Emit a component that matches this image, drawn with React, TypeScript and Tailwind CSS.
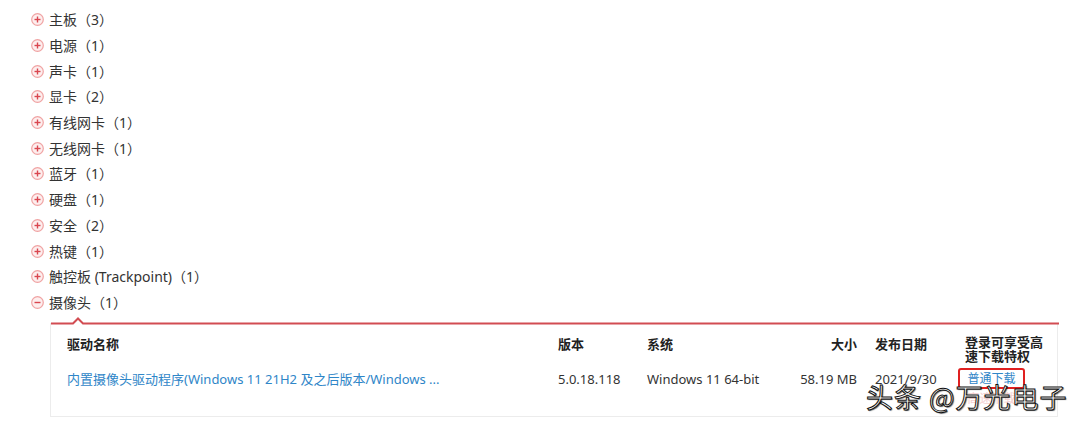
import React from "react";

const categories = [
  "主板（3）",
  "电源（1）",
  "声卡（1）",
  "显卡（2）",
  "有线网卡（1）",
  "无线网卡（1）",
  "蓝牙（1）",
  "硬盘（1）",
  "安全（2）",
  "热键（1）",
  "触控板 (Trackpoint)（1）",
];

function ToggleIcon({ open }: { open?: boolean }) {
  return (
    <svg width="13" height="13" viewBox="0 0 13 13" className="shrink-0">
      <circle cx="6.5" cy="6.5" r="5.8" fill="#fdeeee" stroke="#f0a3a3" strokeWidth="1.2" />
      <path d="M3.5 6.5h6" stroke="#d9464f" strokeWidth="1.4" />
      {!open && <path d="M6.5 3.5v6" stroke="#d9464f" strokeWidth="1.4" />}
    </svg>
  );
}

const cols = "grid grid-cols-[491px_89px_120px_90px_18px_90px_1fr] pl-[16px]";

export default function App() {
  return (
    <div
      className="relative h-[423px] w-[1080px] overflow-hidden bg-white text-[14px] text-[#333]"
      style={{ fontFamily: '"Noto Sans", "Noto Sans CJK SC", sans-serif' }}
    >
      <ul className="pt-[7px] pl-[31px]">
        {categories.map((c) => (
          <li key={c} className="flex h-[25.7px] items-center gap-[5px]">
            <ToggleIcon />
            <span>{c}</span>
          </li>
        ))}
        <li className="flex h-[25.7px] items-center gap-[5px]">
          <ToggleIcon open />
          <span>摄像头（1）</span>
        </li>
      </ul>

      {/* 驱动列表 */}
      <div className="relative mt-[8px] ml-[50px] h-[94px] w-[1008px] border-x border-b border-[#ececec]">
        <svg width="1008" height="8" viewBox="0 0 1008 8" className="absolute -top-[6px] left-0">
          <path d="M0 6.5H22L27 1.5L32 6.5H1008" fill="none" stroke="#d24c52" strokeWidth="2" />
        </svg>
        <div className="h-[1px]" />
        <div className={`${cols} pt-[11px] text-[13px]`}>
          <div className="font-bold text-[#222]">驱动名称</div>
          <div className="font-bold text-[#222]">版本</div>
          <div className="font-bold text-[#222]">系统</div>
          <div className="text-right font-bold text-[#222]">大小</div>
          <div />
          <div className="font-bold text-[#222]">发布日期</div>
          <div className="whitespace-nowrap font-bold leading-[14px] text-[#222]">
            登录可享受高
            <br />
            速下载特权
          </div>
        </div>
        <div className={`${cols} items-start pt-[5px] text-[13px]`}>
          <div className="truncate pr-[50px] pt-[2px] text-[#2f86c8]">
            内置摄像头驱动程序(Windows 11 21H2 及之后版本/Windows ...
          </div>
          <div className="pt-[2px]">5.0.18.118</div>
          <div className="pt-[2px]">Windows 11 64-bit</div>
          <div className="pt-[2px] text-right">58.19 MB</div>
          <div />
          <div className="pt-[2px]">2021/9/30</div>
          <div className="-ml-[7px]">
            <div className="w-[67px] rounded-[3px] border-2 border-[#e02020] text-center text-[12px] leading-[17px] text-[#2f86c8]">
              普通下载
            </div>
            <div className="mt-[3px] w-[67px] text-center text-[12px] leading-[14px] text-[#f5d0d0]">
              高速下载
            </div>
          </div>
        </div>
      </div>

      {/* 水印 */}
      <div
        className="absolute left-[866px] top-[381px] text-[27px] leading-[32px] tracking-[1px] text-white"
        style={{
          fontFamily: '"Noto Sans CJK SC", sans-serif',
          WebkitTextStroke: "1px #111",
          textShadow: "1px 1px 1px rgba(0,0,0,0.6)",
        }}
      >
        头条 @万光电子
      </div>
    </div>
  );
}
